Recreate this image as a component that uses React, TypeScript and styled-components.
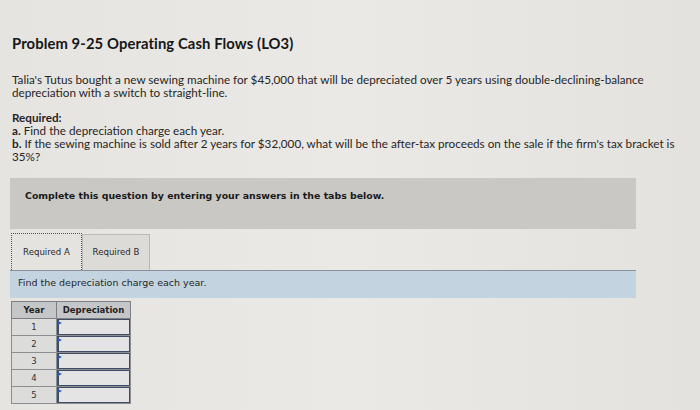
import styled, { createGlobalStyle } from "styled-components";

const GlobalStyle = createGlobalStyle`
  html, body {
    margin: 0;
    padding: 0;
    background: #e9e7e3;
  }
  body {
    font-family: "Lato", "Open Sans", sans-serif;
    color: #1e1e1e;
  }
`;

const Page = styled.div`
  width: 700px;
  height: 410px;
  overflow: hidden;
  padding: 34px 10px 0 12px;
  box-sizing: border-box;
  background: linear-gradient(90deg, #e6e4e0 0%, #ebe9e5 50%, #e4e2de 100%);
`;

const Title = styled.h1`
  margin: 0 0 21px 0;
  font-size: 14.8px;
  font-weight: 700;
  letter-spacing: 0.1px;
  color: #161616;
`;

const Para = styled.p`
  margin: 0 0 11px 0;
  font-size: 11.7px;
  line-height: 13.3px;
  color: #262626;
`;

const Strong = styled.span`
  font-weight: 700;
`;

const InfoBox = styled.div`
  margin: 14px 0 0 -2px;
  width: 626px;
  height: 51px;
  background: #c9c8c5;
  box-sizing: border-box;
  padding: 12px 0 0 15px;
  font-family: "DejaVu Sans", sans-serif;
  font-size: 9.4px;
  font-weight: 700;
  color: #1a1a1a;
`;

const Tabs = styled.div`
  display: flex;
  margin: 4px 0 0 -1px;
`;

const Tab = styled.div<{ $active?: boolean }>`
  width: ${({ $active }) => ($active ? "71px" : "68px")};
  height: ${({ $active }) => ($active ? "37px" : "36px")};
  box-sizing: border-box;
  display: flex;
  align-items: center;
  justify-content: center;
  font-family: "DejaVu Sans", sans-serif;
  font-size: 8.6px;
  color: #2a2a2a;
  background: ${({ $active }) => ($active ? "#e4e3e0" : "#dcdbd8")};
  border: ${({ $active }) => ($active ? "1px dotted #555" : "1px solid #b9b9b7")};
  border-bottom: none;
  margin-top: ${({ $active }) => ($active ? "0" : "1px")};
`;

const PromptBar = styled.div`
  margin: 0 0 0 -2px;
  width: 626px;
  height: 28px;
  background: #c3d3df;
  border-top: 1px solid #8a9299;
  box-sizing: border-box;
  padding: 6px 0 0 8px;
  font-family: "DejaVu Sans", sans-serif;
  font-size: 9.5px;
  color: #262626;
`;

const Table = styled.table`
  margin: 3px 0 0 -1px;
  border-collapse: collapse;
  font-family: "DejaVu Sans", sans-serif;
  font-size: 8.5px;
`;

const Th = styled.th<{ $w: number }>`
  width: ${({ $w }) => $w}px;
  height: 16px;
  padding: 0;
  background: #c5c6c8;
  border: 1px solid #7d7f82;
  font-weight: 700;
  color: #222;
`;

const YearCell = styled.td`
  height: 16px;
  padding: 0;
  text-align: center;
  background: #dcdcdb;
  border: 1px solid #8c8e91;
  color: #333;
`;

const InputCell = styled.td`
  position: relative;
  padding: 0;
  background: #e1e1e0;
  border: 1px solid #8c8e91;
`;

const InputBox = styled.div`
  height: 14px;
  margin: 0;
  border: 1px solid #3f4e66;
  border-left-width: 2px;
  background: #e4e4e4;
`;

const Marker = styled.span`
  position: absolute;
  top: 2px;
  left: 1px;
  width: 0;
  height: 0;
  border-top: 2px solid transparent;
  border-bottom: 2px solid transparent;
  border-left: 4px solid #2c5cad;
`;

const years = [1, 2, 3, 4, 5];

export default function App() {
  return (
    <>
      <GlobalStyle />
      <Page>
        <Title>Problem 9-25 Operating Cash Flows (LO3)</Title>
        <Para>
          Talia's Tutus bought a new sewing machine for $45,000 that will be depreciated over 5 years using
          double-declining-balance
          <br />
          depreciation with a switch to straight-line.
        </Para>
        <Para>
          <Strong>Required:</Strong>
          <br />
          <Strong>a.</Strong> Find the depreciation charge each year.
          <br />
          <Strong>b.</Strong> If the sewing machine is sold after 2 years for $32,000, what will be the after-tax
          proceeds on the sale if the firm's tax bracket is
          <br />
          35%?
        </Para>
        <InfoBox>Complete this question by entering your answers in the tabs below.</InfoBox>
        <Tabs>
          <Tab $active>Required A</Tab>
          <Tab>Required B</Tab>
        </Tabs>
        <PromptBar>Find the depreciation charge each year.</PromptBar>
        <Table>
          <thead>
            <tr>
              <Th $w={44}>Year</Th>
              <Th $w={73}>Depreciation</Th>
            </tr>
          </thead>
          <tbody>
            {years.map((y) => (
              <tr key={y}>
                <YearCell>{y}</YearCell>
                <InputCell>
                  <InputBox />
                  <Marker />
                </InputCell>
              </tr>
            ))}
          </tbody>
        </Table>
      </Page>
    </>
  );
}
